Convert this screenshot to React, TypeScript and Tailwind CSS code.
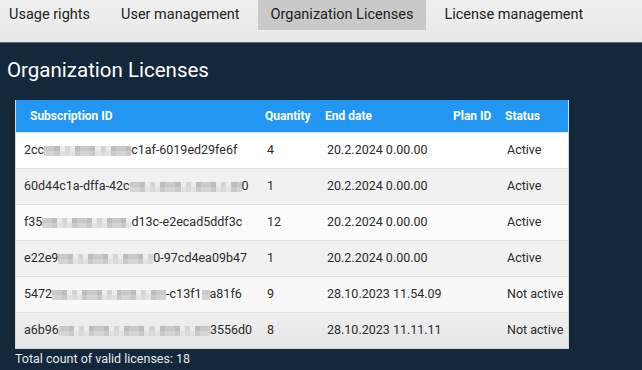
import React from 'react';

const TABS = ['Usage rights', 'User management', 'Organization Licenses', 'License management'];
const ACTIVE_TAB = 'Organization Licenses';

// pixelated blocks that hide part of an id
const SHADES = ['bg-[#c9c9c9]', 'bg-[#e3e3e3]', 'bg-transparent', 'bg-[#d4d4d4]', 'bg-[#bdbdbd]', 'bg-[#ececec]', 'bg-[#dadada]'];

type Part = string | { blur: number };

interface Row {
  id: Part[];
  quantity: string;
  endDate: string;
  planId: string;
  status: string;
  bg: string;
}

const ROWS: Row[] = [
  { id: ['2cc', { blur: 87 }, 'c1af-6019ed29fe6f'], quantity: '4', endDate: '20.2.2024 0.00.00', planId: '', status: 'Active', bg: 'bg-white' },
  { id: ['60d44c1a-dffa-42c', { blur: 112 }, '0'], quantity: '1', endDate: '20.2.2024 0.00.00', planId: '', status: 'Active', bg: 'bg-[#f1f1f1]' },
  { id: ['f35', { blur: 89 }, 'd13c-e2ecad5ddf3c'], quantity: '12', endDate: '20.2.2024 0.00.00', planId: '', status: 'Active', bg: 'bg-[#fbfbfb]' },
  { id: ['e22e9', { blur: 95 }, '0-97cd4ea09b47'], quantity: '1', endDate: '20.2.2024 0.00.00', planId: '', status: 'Active', bg: 'bg-[#f1f1f1]' },
  { id: ['5472', { blur: 114 }, '-c13f1', { blur: 8 }, 'a81f6'], quantity: '9', endDate: '28.10.2023 11.54.09', planId: '', status: 'Not active', bg: 'bg-[#f8f8f8]' },
  { id: ['a6b96', { blur: 151 }, '3556d0'], quantity: '8', endDate: '28.10.2023 11.11.11', planId: '', status: 'Not active', bg: 'bg-gradient-to-b from-[#f0f0f0] to-[#e4e4e4]' },
];

function Blur({ width }: { width: number }) {
  const cols = Math.max(1, Math.round(width / 5));
  return (
    <span className="inline-flex flex-col align-middle" style={{ width }}>
      {[0, 1].map((r) => (
        <span key={r} className="flex h-[5px]">
          {Array.from({ length: cols }).map((_, c) => (
            <span key={c} className={`h-full flex-1 ${SHADES[(c * 5 + r * 3 + c * c * 2) % SHADES.length]}`} />
          ))}
        </span>
      ))}
    </span>
  );
}

function IdCell({ parts }: { parts: Part[] }) {
  return (
    <span className="whitespace-nowrap">
      {parts.map((p, i) => (typeof p === 'string' ? <span key={i}>{p}</span> : <Blur key={i} width={p.blur} />))}
    </span>
  );
}

const GRID = 'grid grid-cols-[243px_60px_128px_52px_1fr] items-center';

export default function App() {
  return (
    <div className="w-[642px] h-[370px] overflow-hidden bg-[#13283a] font-['Roboto','Liberation_Sans',sans-serif]">
      <nav className="h-[43px] bg-gradient-to-b from-[#efefef] to-[#e8e8e8] border-b border-[#5d6a74] flex items-start gap-[5px] -ml-[4px]">
        {TABS.map((tab) => (
          <div
            key={tab}
            className={`h-[30px] px-[13px] flex items-center text-[14.5px] text-[#222] ${tab === ACTIVE_TAB ? 'bg-[#c9c9c9]' : ''}`}
          >
            {tab}
          </div>
        ))}
      </nav>

      <h1 className="pl-[7px] pt-[14px] h-[57px] text-[20.5px] leading-[26px] text-white">Organization Licenses</h1>

      <div className="ml-[15px] w-[554px] border-l border-r border-b border-[#d5d9dc] bg-white">
        <div className={`${GRID} h-[32px] bg-[#2196f3] text-white text-[12px] font-bold`}>
          <div className="pl-[14px]">Subscription ID</div>
          <div className="pl-[6px]">Quantity</div>
          <div className="pl-[6px]">End date</div>
          <div className="pl-[6px]">Plan ID</div>
          <div className="pl-[6px]">Status</div>
        </div>
        {ROWS.map((row, i) => (
          <div key={i} className={`${GRID} h-[36px] border-t border-[#e0e0e0] text-[12.5px] text-[#2b2b2b] ${row.bg}`}>
            <div className="pl-[8px]">
              <IdCell parts={row.id} />
            </div>
            <div className="pl-[8px]">{row.quantity}</div>
            <div className="pl-[8px]">{row.endDate}</div>
            <div className="pl-[8px]">{row.planId}</div>
            <div className="pl-[8px]">{row.status}</div>
          </div>
        ))}
      </div>

      <p className="pl-[15px] pt-[2px] text-[12.5px] leading-[16px] text-[#e4e9ed]">Total count of valid licenses: 18</p>
    </div>
  );
}
